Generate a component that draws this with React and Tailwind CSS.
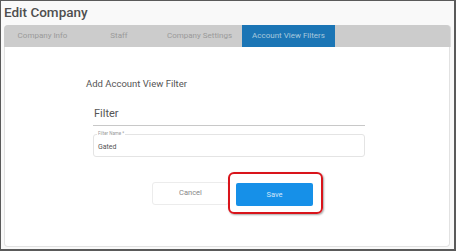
export default function App() {
  const tabs = [
    { label: 'Company Info', w: 'w-[77px]' },
    { label: 'Staff', w: 'w-[76px]' },
    { label: 'Company Settings', w: 'w-[85px]' },
    { label: 'Account View Filters', w: 'w-[93px]', active: true },
  ]

  return (
    <div className="w-[456px] h-[251px] bg-[#5a5a5a] pl-px pt-px pr-[2px] pb-[2px] font-['Roboto',sans-serif]">
      <div className="w-full h-full bg-[#f9f9f9] flex flex-col px-[3px]">
        {/* Header */}
        <h1 className="text-[13.5px] leading-[18px] font-medium text-[#4f4f4f] pt-[2px] h-[24px]">
          Edit Company
        </h1>

        {/* Tabs */}
        <div className="flex h-[22px] bg-[#cccccc] rounded-t-[4px] mr-[1px] shadow-[1px_0_0_#dcdcdc]">
          {tabs.map((tab) => (
            <div
              key={tab.label}
              className={`${tab.w} flex items-center justify-center text-[8px] ${
                tab.active ? 'bg-[#1b75b5] text-[#a9c9dd]' : 'text-[#9a9a9a]'
              }`}
            >
              {tab.label}
            </div>
          ))}
        </div>

        {/* Card */}
        <div className="flex-1 mb-[2px] mr-[1px] bg-white border border-t-0 border-[#e2e2e2] rounded-b-[4px] flex flex-col">
          <div className="pl-[81px] pt-[31px] text-[9.5px] leading-[12px] text-[#555]">
            Add Account View Filter
          </div>

          <div className="ml-[88px] mr-[84px] mt-[17px]">
            <div className="text-[11px] leading-[14px] text-[#555] pl-px pb-[4px] border-b border-[#c8c8c8]">
              Filter
            </div>

            <div className="relative mt-[8px] h-[23px] border border-[#e4e4e4] rounded-[3px] flex items-center pl-[4px] pt-[4px]">
              <span className="absolute -top-[4px] left-[3px] bg-white px-px text-[4.5px] leading-[6px] text-[#999]">
                Filter Name *
              </span>
              <span className="text-[7px] text-[#555]">Gated</span>
            </div>
          </div>

          <div className="flex justify-center items-center gap-[7px] mt-[23px] pl-[11px]">
            <button className="w-[77px] h-[23px] bg-white border border-[#ececec] rounded-[3px] text-[7.5px] text-[#888]">
              Cancel
            </button>
            <div className="relative">
              <button className="w-[77px] h-[23px] bg-[#1690e8] rounded-[2px] text-[7.5px] text-[#cfe6fa]">
                Save
              </button>
              <span className="absolute -left-[8px] -right-[10px] -top-[8px] -bottom-[8px] border-2 border-[#d9141b] rounded-[6px] shadow-[1px_1px_2px_rgba(0,0,0,0.35)]" />
            </div>
          </div>
        </div>
      </div>
    </div>
  )
}
